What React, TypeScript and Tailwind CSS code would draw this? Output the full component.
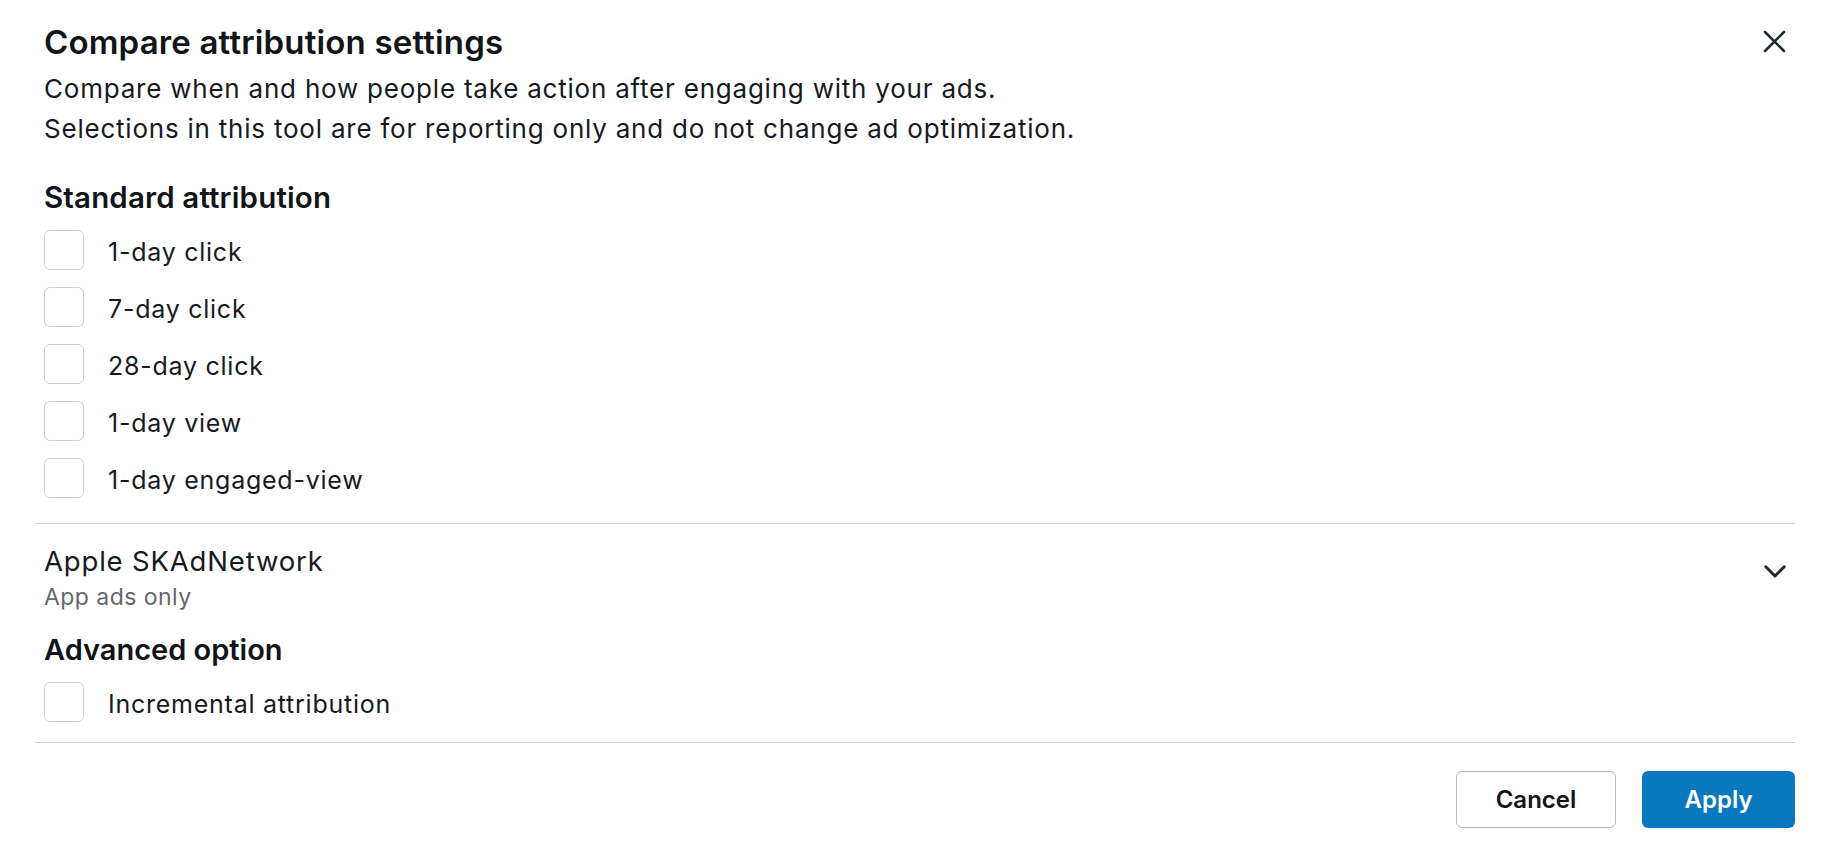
import React from "react";

const FONT = { fontFamily: "Inter, 'Liberation Sans', Arial, sans-serif" };

function Checkbox() {
  return (
    <div className="h-[40px] w-[40px] shrink-0 rounded-[6px] border-[1.5px] border-[#ccd0d5] bg-white" />
  );
}

function Row({ label }: { label: string }) {
  return (
    <div className="flex h-[40px] items-center">
      <Checkbox />
      <span className="ml-[24px] pt-[3px] text-[25px] leading-[40px] tracking-[0.03em] text-[#161a1f]">
        {label}
      </span>
    </div>
  );
}

export default function App() {
  const rows = ["1-day click", "7-day click", "28-day click", "1-day view", "1-day engaged-view"];
  return (
    <div className="h-[857px] w-full bg-white pl-[35px] pr-[40px]" style={FONT}>
      <div className="px-[9px]">
        <div className="flex items-start justify-between pt-[22px]">
          <h1 className="text-[33px] font-semibold leading-[40px] tracking-[0.005em] text-[#111418]">
            Compare attribution settings
          </h1>
          <button className="mt-[8px]" aria-label="Close">
            <svg width="23" height="23" viewBox="0 0 23 23" fill="none">
              <path d="M2 2 L21 21 M21 2 L2 21" stroke="#1c2b33" strokeWidth="2.6" strokeLinecap="round" />
            </svg>
          </button>
        </div>
        <div className="mt-[7px] text-[26px] leading-[40px] tracking-[0.03em] text-[#161a1f]">
          <p>Compare when and how people take action after engaging with your ads.</p>
          <p>Selections in this tool are for reporting only and do not change ad optimization.</p>
        </div>
        <h2 className="mt-[30px] text-[29.5px] font-semibold leading-[36px] tracking-[0.005em] text-[#111418]">
          Standard attribution
        </h2>
        <div className="mt-[15px] flex flex-col gap-[17px]">
          {rows.map((r) => (
            <Row key={r} label={r} />
          ))}
        </div>
      </div>
      <div className="mt-[25px] h-px bg-[#ced0d4]" />
      <div className="px-[9px]">
        <div className="mt-[21px] flex items-start justify-between">
          <div>
            <div className="text-[27.5px] leading-[33px] tracking-[0.03em] text-[#161a1f]">Apple SKAdNetwork</div>
            <div className="mt-[5px] text-[23px] leading-[28px] tracking-[0.02em] text-[#65676b]">App ads only</div>
          </div>
          <svg className="mt-[20px]" width="22" height="13" viewBox="0 0 22 13" fill="none">
            <path d="M1.8 1.8 L11 11 L20.2 1.8" stroke="#1c2b33" strokeWidth="3" strokeLinecap="round" strokeLinejoin="round" />
          </svg>
        </div>
        <h2 className="mt-[21px] text-[29px] font-semibold leading-[36px] text-[#111418]">Advanced option</h2>
        <div className="mt-[14px]">
          <Row label="Incremental attribution" />
        </div>
      </div>
      <div className="mt-[20px] h-px bg-[#ced0d4]" />
      <div className="mt-[28px] flex justify-end gap-[26px]">
        <button className="h-[57px] w-[160px] rounded-[6px] border-[1.5px] border-[#b8bcc1] bg-white text-[24px] font-semibold text-[#111418]">
          Cancel
        </button>
        <button className="h-[57px] w-[153px] rounded-[6px] bg-[#0a78be] text-[24px] font-semibold text-white">
          Apply
        </button>
      </div>
    </div>
  );
}
